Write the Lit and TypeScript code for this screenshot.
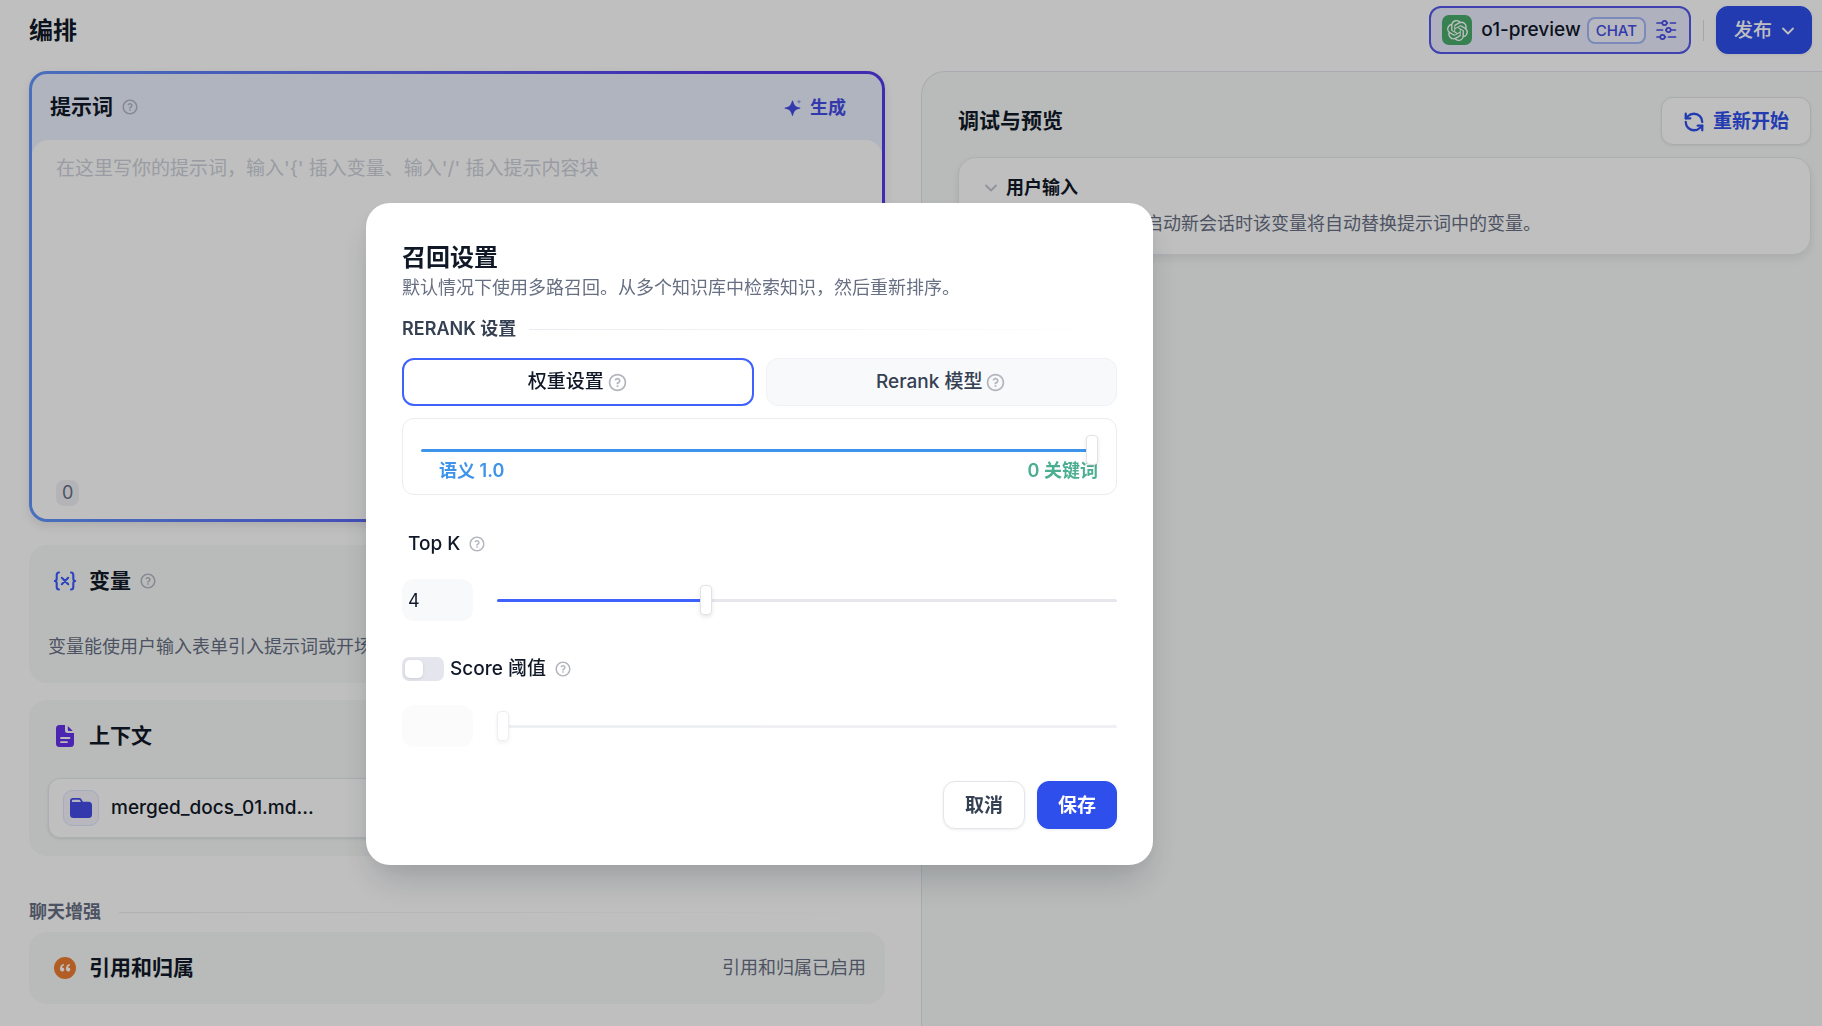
import { LitElement, html, css } from "lit";
import { customElement, property, state } from "lit/decorators.js";

const helpIcon = html`<svg class="help" viewBox="0 0 24 24" aria-hidden="true"><path fill="currentColor" d="M12 22C6.47715 22 2 17.5228 2 12C2 6.47715 6.47715 2 12 2C17.5228 2 22 6.47715 22 12C22 17.5228 17.5228 22 12 22ZM12 20C16.4183 20 20 16.4183 20 12C20 7.58172 16.4183 4 12 4C7.58172 4 4 7.58172 4 12C4 16.4183 7.58172 20 12 20ZM11 15H13V17H11V15ZM13 13.3551V14H11V12.5C11 11.9477 11.4477 11.5 12 11.5C12.8284 11.5 13.5 10.8284 13.5 10C13.5 9.17157 12.8284 8.5 12 8.5C11.2723 8.5 10.6656 9.01823 10.5288 9.70577L8.56731 9.31346C8.88637 7.70919 10.302 6.5 12 6.5C13.933 6.5 15.5 8.067 15.5 10C15.5 11.5855 14.4457 12.9248 13 13.3551Z"/></svg>`;

const openAiIcon = html`<svg class="openai" viewBox="0 0 24 24" aria-hidden="true"><path fill="#fff" d="M22.2819 9.8211a5.9847 5.9847 0 0 0-.5157-4.9108 6.0462 6.0462 0 0 0-6.5098-2.9A6.0651 6.0651 0 0 0 4.9807 4.1818a5.9847 5.9847 0 0 0-3.9977 2.9 6.0462 6.0462 0 0 0 .7427 7.0966 5.98 5.98 0 0 0 .511 4.9107 6.051 6.051 0 0 0 6.5146 2.9001A5.9847 5.9847 0 0 0 13.2599 24a6.0557 6.0557 0 0 0 5.7718-4.2058 5.9894 5.9894 0 0 0 3.9977-2.9001 6.0557 6.0557 0 0 0-.7475-7.0729zm-9.022 12.6081a4.4755 4.4755 0 0 1-2.8764-1.0408l.1419-.0804 4.7783-2.7582a.7948.7948 0 0 0 .3927-.6813v-6.7369l2.02 1.1686a.071.071 0 0 1 .038.052v5.5826a4.504 4.504 0 0 1-4.4945 4.4944zm-9.6607-4.1254a4.4708 4.4708 0 0 1-.5346-3.0137l.142.0852 4.783 2.7582a.7712.7712 0 0 0 .7806 0l5.8428-3.3685v2.3324a.0804.0804 0 0 1-.0332.0615L9.74 19.9502a4.4992 4.4992 0 0 1-6.1408-1.6464zM2.3408 7.8956a4.485 4.485 0 0 1 2.3655-1.9728V11.6a.7664.7664 0 0 0 .3879.6765l5.8144 3.3543-2.0201 1.1685a.0757.0757 0 0 1-.071 0l-4.8303-2.7865A4.504 4.504 0 0 1 2.3408 7.872zm16.5963 3.8558L13.1038 8.364 15.1192 7.2a.0757.0757 0 0 1 .071 0l4.8303 2.7913a4.4944 4.4944 0 0 1-.6765 8.1042v-5.6772a.79.79 0 0 0-.407-.667zm2.0107-3.0231l-.142-.0852-4.7735-2.7818a.7759.7759 0 0 0-.7854 0L9.409 9.2297V6.8974a.0662.0662 0 0 1 .0284-.0615l4.8303-2.7866a4.4992 4.4992 0 0 1 6.6802 4.66zM8.3065 12.863l-2.02-1.1638a.0804.0804 0 0 1-.038-.0567V6.0742a4.4992 4.4992 0 0 1 7.3757-3.4537l-.142.0805L8.704 5.459a.7948.7948 0 0 0-.3927.6813zm1.0976-2.3654l2.602-1.4998 2.6069 1.4998v2.9994l-2.5974 1.4997-2.6067-1.4997Z"/></svg>`;

const slidersIcon = html`<svg class="i22" viewBox="0 0 22 22" fill="none" stroke="currentColor" stroke-width="1.7" stroke-linecap="round" aria-hidden="true">
  <path d="M2 4H7M15.500 4H20.500M2 11H7.500M16 11H20.500M2 18H5M13.500 18H20.500"/>
  <circle cx="9.500" cy="4" r="2.2"/><path d="M11.900 4h.6M10.800 11h.4"/><circle cx="13.500" cy="11" r="2.2"/><circle cx="7.500" cy="18" r="2.2"/><path d="M9.900 18h.6"/></svg>`;

const chevronIcon = html`<svg class="chev" viewBox="0 0 16 16" fill="none" stroke="currentColor" stroke-width="1.8" stroke-linecap="round" stroke-linejoin="round" aria-hidden="true"><path d="M3 5.500l5 5 5-5"/></svg>`;

const sparkleIcon = html`<svg class="i18" viewBox="0 0 18 18" fill="currentColor" aria-hidden="true">
  <path d="M8.500 1.500c.3 0 .5.200.6.600.9 4.100 2.200 5.600 6.700 6.500.8.200.8 1 0 1.200-4.500.9-5.800 2.400-6.700 6.500-.2.800-1 .8-1.200 0-.9-4.100-2.200-5.600-6.700-6.500-.8-.2-.8-1 0-1.200 4.500-.9 5.800-2.400 6.700-6.500.1-.4.300-.6.600-.6z"/>
  <path opacity=".5" d="M15 .3c.3 1.500.8 2 2.400 2.400-1.600.4-2.100.9-2.400 2.400-.3-1.500-.8-2-2.400-2.400C14.200 2.300 14.700 1.800 15 .3z"/></svg>`;

const refreshIcon = html`<svg class="i22" viewBox="0 0 24 24" fill="none" stroke="currentColor" stroke-width="2.5" stroke-linecap="round" stroke-linejoin="round" aria-hidden="true"><path d="M21 12a9 9 0 0 0-9-9 9.750 9.750 0 0 0-6.740 2.740L3 8"/><path d="M3 3v5h5"/><path d="M3 12a9 9 0 0 0 9 9 9.750 9.750 0 0 0 6.740-2.740L21 16"/><path d="M16 16h5v5"/></svg>`;

const variableIcon = html`<svg class="i24" viewBox="0 0 24 24" fill="none" stroke="#3b5bff" stroke-width="2.1" stroke-linecap="round" stroke-linejoin="round" aria-hidden="true"><path d="M6 3.500C4 3.500 3.700 4.500 3.700 6v3.500C3.700 11 3 12 1.800 12 3 12 3.700 13 3.700 14.500V18c0 1.500.3 2.500 2.300 2.500M18 3.500c2 0 2.300 1 2.300 2.500v3.500c0 1.500.7 2.500 1.900 2.500-1.200 0-1.900 1-1.900 2.500V18c0 1.500-.3 2.500-2.300 2.500"/><path d="M8.800 8.800l6.400 6.400M15.200 8.800l-6.400 6.400"/></svg>`;

const docIcon = html`<svg class="i24" viewBox="0 0 24 24" aria-hidden="true"><path fill="#6531ec" d="M6.500 1H12v5.500A2.500 2.500 0 0 0 14.500 9H21v10.500a3.500 3.500 0 0 1-3.500 3.500h-11A3.500 3.500 0 0 1 3 19.500v-15A3.500 3.500 0 0 1 6.500 1z"/><path fill="#6531ec" d="M14.800 2l5 5h-4a1 1 0 0 1-1-1z"/><path stroke="#f7faf8" stroke-width="1.8" stroke-linecap="round" d="M8 14h8.500M8 18.200h6"/></svg>`;

const folderIcon = html`<svg class="i24" viewBox="0 0 24 24" aria-hidden="true"><path fill="#444ce7" d="M4 2h6.200c1 0 1.700.4 2.200 1.200L13.900 5.700H19.500A3.500 3.500 0 0 1 23 9.200v9.300a3.500 3.500 0 0 1-3.500 3.500h-15A3.500 3.500 0 0 1 1 18.500V5a3 3 0 0 1 3-3z"/><path fill="#eef1ff" d="M4.300 3.800h5.800c.4 0 .7.200.9.500l1 1.600H2.900v-.7c0-.8.6-1.400 1.400-1.400z"/></svg>`;

const quoteIcon = html`<svg class="i24" viewBox="0 0 24 24" aria-hidden="true"><circle cx="12" cy="12" r="11" fill="#ef7d33"/><path fill="#fff" d="M11 8v1.500c-1.300.3-1.900 1-2 2h.4c1.100 0 1.900.8 1.900 1.900S10.400 15.500 9.200 15.500C7.700 15.500 7 14.300 7 12.500 7 10 8.300 8.300 11 8zM17 8v1.500c-1.300.3-1.900 1-2 2h.4c1.100 0 1.900.8 1.900 1.900s-.9 2.100-2.100 2.100C13.700 15.500 13 14.300 13 12.500 13 10 14.300 8.300 17 8z"/></svg>`;

const base = css`
  * { box-sizing: border-box; }
  button, input, textarea { font: inherit; color: inherit; margin: 0; }
  button { cursor: pointer; }
  h1, h2, h3, p { margin: 0; }
  svg { display: block; flex: none; }
  .help { width: 18px; height: 18px; color: #b4b6bd; }
  .i18 { width: 18px; height: 18px; }
  .i22 { width: 22px; height: 22px; }
  .i24 { width: 24px; height: 24px; }
  .chev { width: 16px; height: 16px; }
  .btn {
    display: flex; align-items: center; justify-content: center; gap: 8px;
    height: 48px; padding: 2px 20px 0; border-radius: 12px; border: 1px solid #e3e5ea;
    background: #fff; font-size: 19px; line-height: 28px; font-weight: 600;
    box-shadow: 0 1px 3px rgba(16, 24, 40, .08); white-space: nowrap;
  }
  .primary { background: #2f4fed; border-color: #2f4fed; color: #fff; }
`;

@customElement("range-slider")
class RangeSlider extends LitElement {
  @property() label = "";
  @property({ type: Number }) min = 0;
  @property({ type: Number }) max = 1;
  @property({ type: Number }) step = 1;
  @property({ type: Number }) value = 0;
  @property({ type: Boolean }) disabled = false;

  static styles = css`
    :host { display: block; position: relative; z-index: 1; }
    .range {
      appearance: none; display: block; width: 100%; height: 30px; margin: 0;
      background: none; outline: none;
    }
    .range::-webkit-slider-runnable-track {
      height: 3px; border-radius: 2px;
      background: linear-gradient(to right, var(--accent, #3f62ff) var(--fill), #e6e7ed var(--fill));
    }
    .range::-webkit-slider-thumb {
      appearance: none; width: 12px; height: 30px; margin-top: -14px;
      border: 1px solid #e2e3e8; border-radius: 4px; background: #fff;
      box-shadow: 0 2px 4px rgba(16, 24, 40, .1);
    }
    .range:disabled { opacity: .6; }
  `;

  private onInput(e: Event) {
    this.value = Number((e.target as HTMLInputElement).value);
    this.dispatchEvent(new CustomEvent("change", { detail: this.value }));
  }

  render() {
    const fill = ((this.value - this.min) / (this.max - this.min)) * 100;
    return html`<input class="range" type="range" aria-label=${this.label}
      min=${this.min} max=${this.max} step=${this.step} .value=${String(this.value)}
      ?disabled=${this.disabled} style="--fill:${fill}%" @input=${this.onInput} />`;
  }
}

@customElement("recall-dialog")
class RecallDialog extends LitElement {
  @state() private semantic = 1;
  @state() private topK = 4;
  @state() private mode = "weight";
  @state() private scoreOn = false;

  static styles = [base, css`
    :host { display: block; width: 787px; max-width: 100%; }
    .dialog {
      background: #fff; border-radius: 24px; padding: 37px 36px 36px;
      box-shadow: 0 20px 36px -8px rgba(16, 24, 40, .2), 0 4px 16px rgba(16, 24, 40, .04);
      color: #101828;
    }
    .title { font-size: 24px; line-height: 36px; font-weight: 600; }
    .sub { font-size: 18px; line-height: 24px; color: #676f83; }
    .section { display: flex; align-items: center; gap: 13px; margin-top: 17px; font-size: 18px; line-height: 24px; font-weight: 600; color: #354052; }
    .rule { flex: 1; height: 1px; background: linear-gradient(to right, #e9ebf0, rgba(233, 235, 240, 0)); }
    .modes { display: grid; grid-template-columns: 1fr 1fr; gap: 12px; margin-top: 17px; }
    .mode {
      display: flex; align-items: center; justify-content: center; gap: 3px; height: 48px;
      border: 1px solid #f0f1f5; border-radius: 12px; background: #f8f9fb;
      font-size: 19px; line-height: 28px; font-weight: 500; color: #354052;
    }
    .mode .help { width: 21px; height: 21px; }
    .mode.on { border: 2px solid #3f62ff; background: #fff; color: #101828; }
    .weights { margin-top: 12px; height: 77px; padding: 16px 18px 0; border: 1px solid #ececf0; border-radius: 12px; --accent: #3d94ea; }
    .labels { display: flex; justify-content: space-between; margin-top: -6px; padding-left: 18px; font-size: 18px; line-height: 24px; font-weight: 600; }
    .sem { color: #3d94ea; }
    .key { color: #4bae91; }
    .field { display: flex; align-items: center; gap: 6px; height: 28px; font-size: 19px; line-height: 28px; font-weight: 500; }
    .field .help { margin-left: 2px; }
    .topk { margin-top: 35px; padding-left: 6px; }
    .row { display: grid; grid-template-columns: 71px 1fr; align-items: center; gap: 24px; margin-top: 21px; }
    .num { width: 71px; height: 42px; padding: 0 6px; border: 0; border-radius: 12px; background: #f8f9fb; font-size: 18px; line-height: 24px; appearance: textfield; }
    .num:disabled { background: #fbfbfb; }
    .score { margin-top: 34px; }
    .score + .row { margin-top: 22px; }
    .switch { width: 42px; height: 24px; padding: 3px; border: 0; border-radius: 7px; background: #e5e6ed; display: flex; }
    .switch.on { background: #3f62ff; justify-content: flex-end; }
    .knob { width: 18px; height: 18px; border-radius: 5px; background: #fff; box-shadow: 0 1px 3px rgba(16, 24, 40, .12); }
    .actions { display: flex; justify-content: flex-end; gap: 12px; margin-top: 34px; }
    .cancel { color: #354052; padding: 2px 21px 0; }
  `];

  render() {
    return html`
      <section class="dialog" role="dialog" aria-modal="true" aria-labelledby="t">
        <h2 class="title" id="t">召回设置</h2>
        <p class="sub">默认情况下使用多路召回。从多个知识库中检索知识，然后重新排序。</p>
        <div class="section">RERANK 设置<span class="rule"></span></div>
        <div class="modes">
          <button class="mode ${this.mode === "weight" ? "on" : ""}" @click=${() => (this.mode = "weight")}>权重设置${helpIcon}</button>
          <button class="mode ${this.mode === "model" ? "on" : ""}" @click=${() => (this.mode = "model")}>Rerank 模型${helpIcon}</button>
        </div>
        <div class="weights">
          <range-slider label="语义" step="0.1" .value=${this.semantic} @change=${(e: CustomEvent) => (this.semantic = e.detail)}></range-slider>
          <div class="labels">
            <span class="sem">语义 ${this.semantic.toFixed(1)}</span>
            <span class="key">${Number((1 - this.semantic).toFixed(1))} 关键词</span>
          </div>
        </div>
        <div class="field topk"><label for="k">Top K</label>${helpIcon}</div>
        <div class="row">
          <input class="num" id="k" type="number" min="1" max="10" .value=${String(this.topK)} @input=${(e: Event) => (this.topK = Number((e.target as HTMLInputElement).value))} />
          <range-slider label="Top K" min="1" max="10" .value=${this.topK} @change=${(e: CustomEvent) => (this.topK = e.detail)}></range-slider>
        </div>
        <div class="field score">
          <button class="switch ${this.scoreOn ? "on" : ""}" role="switch" aria-labelledby="s" aria-checked=${this.scoreOn} @click=${() => (this.scoreOn = !this.scoreOn)}><span class="knob"></span></button>
          <label id="s" for="score">Score 阈值</label>${helpIcon}
        </div>
        <div class="row">
          <input class="num" id="score" type="number" ?disabled=${!this.scoreOn} />
          <range-slider label="Score 阈值" step="0.01" .value=${0} ?disabled=${!this.scoreOn}></range-slider>
        </div>
        <div class="actions">
          <button class="btn cancel">取消</button>
          <button class="btn primary">保存</button>
        </div>
      </section>`;
  }
}

@customElement("app-root")
class AppRoot extends LitElement {
  static styles = [base, css`
    :host {
      display: block; min-height: 100vh; background: #fff; color: #101828;
      font-family: Inter, "Noto Sans CJK SC", sans-serif; -webkit-font-smoothing: antialiased;
    }
    .page { display: flex; flex-direction: column; min-height: 100vh; }
    .top { display: flex; align-items: center; gap: 12px; padding: 6px 10px 17px 29px; }
    .heading { flex: 1; padding-top: 2px; font-size: 24px; line-height: 36px; font-weight: 600; }
    .model {
      display: flex; align-items: center; gap: 6px; height: 48px; padding: 0 12px 0 11px;
      border: 2px solid #5357ea; border-radius: 12px; background: #ebedff;
      font-size: 19px; line-height: 28px; font-weight: 500;
    }
    .logo { display: grid; place-items: center; width: 30px; height: 30px; margin-right: 3px; border-radius: 7px; background: #4aac6c; }
    .openai { width: 21px; height: 21px; }
    .chat { padding: 0 7px; border: 2px solid #a4b9fa; border-radius: 8px; background: #f3f5ff; color: #444ce7; font-size: 15px; line-height: 23px; }
    .model .i22 { margin-left: 3px; color: #444ce7; }
    .divider { width: 1px; height: 21px; background: #dcdee4; }
    .publish { padding: 2px 15px 0 17px; font-weight: 500; }
    .cols { flex: 1; display: grid; grid-template-columns: minmax(0, 856fr) minmax(0, 901fr); gap: 36px; padding-left: 29px; }
    .left { padding-bottom: 22px; }
    .prompt {
      border: 3px solid transparent; border-radius: 18px;
      background: linear-gradient(#ebf0ff, #ebf0ff) padding-box, linear-gradient(to right, #6296fb, #553aee 80%) border-box;
      box-shadow: 0 4px 10px rgba(16, 24, 40, .1);
    }
    .bar { display: flex; align-items: center; justify-content: space-between; height: 66px; padding: 0 36px 0 18px; }
    .name { display: flex; align-items: center; gap: 8px; font-size: 21px; line-height: 30px; font-weight: 600; }
    .name .help { color: #b3b7c2; }
    .gen { display: flex; align-items: center; gap: 8px; padding: 2px 0 0; border: 0; background: none; color: #444ce7; font-size: 18px; line-height: 24px; font-weight: 600; }
    .body { border-radius: 16px; background: #fff; padding: 15px 24px 13px; }
    .text { display: block; width: 100%; height: 325px; padding: 0; border: 0; resize: none; outline: none; background: none; font-size: 19px; line-height: 28px; }
    .text::placeholder { color: #cdd0d9; opacity: 1; }
    .count { display: block; width: fit-content; padding: 0 6px; border-radius: 8px; background: #f0f1f6; color: #676f83; font-size: 18px; line-height: 26px; }
    .card { border-radius: 18px; background: #f7faf8; padding: 20px 19px; }
    .card .name { padding-left: 5px; line-height: 32px; }
    .card .name .i24 { margin-right: 4px; }
    .vars { margin-top: 23px; height: 138px; }
    .note { font-size: 18px; line-height: 24px; color: #676f83; }
    .vars .note { margin-top: 38px; }
    .ctx { margin-top: 17px; padding-bottom: 18px; }
    .file {
      display: flex; align-items: center; gap: 12px; height: 60px; margin-top: 26px; padding: 0 14px;
      border: 1px solid #e6e8ee; border-radius: 12px; background: #fff; box-shadow: 0 1px 3px rgba(16, 24, 40, .1);
      font-size: 19px; line-height: 28px; font-weight: 500;
    }
    .folder { display: grid; place-items: center; width: 36px; height: 36px; border: 1px solid #dfe5fd; border-radius: 9px; background: #f4f5fd; }
    .enhance { display: flex; align-items: center; gap: 18px; margin-top: 44px; font-size: 18px; line-height: 24px; font-weight: 600; color: #676f83; }
    .rule { flex: 1; height: 1px; background: linear-gradient(to right, #ebecf0, rgba(235, 236, 240, 0)); }
    .cite { display: flex; align-items: center; justify-content: space-between; margin-top: 8px; }
    .panel { border: solid #e3e4ec; border-width: 1px 0 0 1px; border-radius: 24px 0 0 0; background: #f7faf8; padding: 25px 11px 24px 36px; }
    .phead { display: flex; align-items: center; justify-content: space-between; }
    .restart { color: #2f4fed; padding: 2px 21px 0; }
    .input { margin-top: 12px; padding: 18px 24px 17px; height: 98px; border: 1px solid #e6e8ee; border-radius: 18px; background: #fff; box-shadow: 0 4px 8px rgba(16, 24, 40, .08); }
    .toggle { display: flex; align-items: center; gap: 7px; padding: 0; border: 0; background: none; font-size: 18px; line-height: 24px; font-weight: 600; }
    .toggle .chev { color: #c0c4cf; }
    .input .note { margin-top: 12px; }
    .overlay {
      position: fixed; inset: 0; display: grid; place-items: center; padding: 42px 303px 0 0;
      background: rgba(0, 0, 0, .25);
    }
  `];

  render() {
    return html`
      <div class="page">
        <header class="top">
          <h1 class="heading">编排</h1>
          <button class="model"><span class="logo">${openAiIcon}</span>o1-preview<span class="chat">CHAT</span>${slidersIcon}</button>
          <span class="divider"></span>
          <button class="btn primary publish">发布${chevronIcon}</button>
        </header>
        <div class="cols">
          <main class="left">
            <section class="prompt">
              <div class="bar">
                <label class="name" for="prompt">提示词${helpIcon}</label>
                <button class="gen">${sparkleIcon}生成</button>
              </div>
              <div class="body">
                <textarea class="text" id="prompt" placeholder="在这里写你的提示词，输入'{' 插入变量、输入'/' 插入提示内容块"></textarea>
                <span class="count">0</span>
              </div>
            </section>
            <section class="card vars">
              <h3 class="name">${variableIcon}变量${helpIcon}</h3>
              <p class="note">变量能使用户输入表单引入提示词或开场白</p>
            </section>
            <section class="card ctx">
              <h3 class="name">${docIcon}上下文</h3>
              <div class="file"><span class="folder">${folderIcon}</span>merged_docs_01.md...</div>
            </section>
            <div class="enhance">聊天增强<span class="rule"></span></div>
            <section class="card cite">
              <h3 class="name">${quoteIcon}引用和归属</h3>
              <span class="note">引用和归属已启用</span>
            </section>
          </main>
          <aside class="panel">
            <div class="phead">
              <h2 class="name">调试与预览</h2>
              <button class="btn restart">${refreshIcon}重新开始</button>
            </div>
            <section class="input">
              <button class="toggle">${chevronIcon}用户输入</button>
              <p class="note">填入变量的值，每次启动新会话时该变量将自动替换提示词中的变量。</p>
            </section>
          </aside>
        </div>
      </div>
      <div class="overlay"><recall-dialog></recall-dialog></div>`;
  }
}
